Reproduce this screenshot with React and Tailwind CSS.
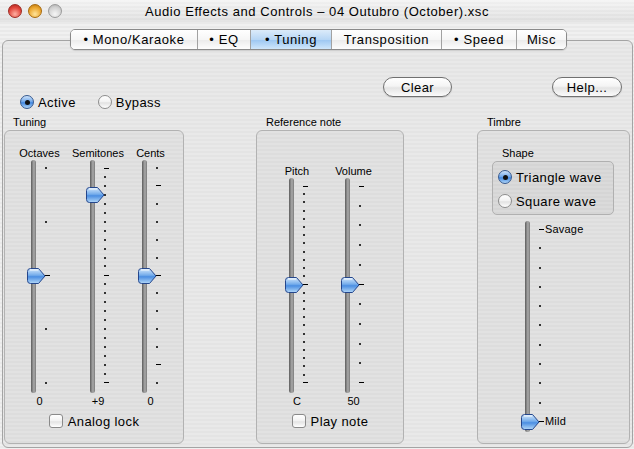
import React from 'react';

const Thumb = ({ top }) => (
  <svg
    width="19"
    height="16"
    viewBox="0 0 19 16"
    className="absolute left-[-4px]"
    style={{ top }}
  >
    <defs>
      <linearGradient id="thumbFill" x1="0" y1="0" x2="0" y2="1">
        <stop offset="0%" stopColor="#d6e9fc" />
        <stop offset="45%" stopColor="#74aceb" />
        <stop offset="55%" stopColor="#4b8ee2" />
        <stop offset="100%" stopColor="#b3d8f8" />
      </linearGradient>
    </defs>
    <path
      d="M3.5 0.5 H11.5 L18 8 L11.5 15.5 H3.5 Q0.5 15.5 0.5 12.5 V3.5 Q0.5 0.5 3.5 0.5 Z"
      fill="url(#thumbFill)"
      stroke="#24468c"
      strokeWidth="1"
    />
    <path d="M3 2 H11" stroke="#ffffff" strokeOpacity="0.7" strokeWidth="1.2" />
  </svg>
);

// vertical aqua slider: track, thumb and tick column
const Slider = ({ hClass, ticks, majors, frac, labels = {} }) => {
  const h = parseInt(hClass.match(/\d+/)[0], 10);
  const center = 8 + frac * (h - 18);
  return (
    <div className={`flex ${hClass}`}>
      <div className="relative h-full w-[5px] rounded-full bg-[linear-gradient(to_right,#5c5c5c,#999999_45%,#a9a9a9_60%,#7a7a7a)]">
        <Thumb top={center - 8} />
      </div>
      <div className="ml-[9px] flex flex-col justify-between pt-[7px] pb-[9px]">
        {Array.from({ length: ticks }).map((_, i) => (
          <div key={i} className="flex h-[2px] items-center">
            <div
              className={
                majors.includes(i)
                  ? 'h-[1px] w-[5px] bg-black'
                  : 'h-[2px] w-[2px] bg-[#333333]'
              }
            />
            {labels[i] && (
              <span className="ml-[1px] whitespace-nowrap text-[11px] leading-none tracking-[0.2px] text-black">
                {labels[i]}
              </span>
            )}
          </div>
        ))}
      </div>
    </div>
  );
};

const Radio = ({ on }) =>
  on ? (
    <div className="flex h-[14px] w-[14px] items-center justify-center rounded-full border border-[#36598f] bg-[linear-gradient(to_bottom,#cfe4fb,#6aa3e8_50%,#3f86e0_56%,#b0d6f8)]">
      <div className="h-[5px] w-[5px] rounded-full bg-[#111111]" />
    </div>
  ) : (
    <div className="h-[14px] w-[14px] rounded-full border border-[#8d8d8d] bg-[linear-gradient(to_bottom,#ffffff,#f2f2f2_50%,#e2e2e2_56%,#ffffff)]" />
  );

const Checkbox = () => (
  <div className="h-[14px] w-[14px] rounded-[3px] border border-[#8a8a8a] bg-[linear-gradient(to_bottom,#ffffff,#f2f2f2_50%,#e3e3e3_56%,#ffffff)]" />
);

const SliderColumn = ({ label, value, widthClass, children }) => (
  <div className={`flex flex-col items-center ${widthClass}`}>
    <span className="text-[11px] leading-[13px]">{label}</span>
    <div className="pl-[2px]">{children}</div>
    <span className="mt-[2px] text-[11px] leading-[13px]">{value}</span>
  </div>
);

const tabs = [
  { label: '• Mono/Karaoke', w: 'w-[126px]' },
  { label: '• EQ', w: 'w-[53px]' },
  { label: '• Tuning', w: 'w-[81px]', active: true },
  { label: 'Transposition', w: 'w-[110px]' },
  { label: '• Speed', w: 'w-[75px]' },
  { label: 'Misc', w: 'w-[50px]' },
];

export default function App() {
  return (
    <div className="h-[449px] w-[634px] overflow-hidden bg-[image:repeating-linear-gradient(to_bottom,#f0f0f0_0px,#f0f0f0_2px,#e9e9e9_2px,#e9e9e9_4px)] font-['Liberation_Sans',Arial,sans-serif] text-black">
      {/* Title bar */}
      <div className="grid h-[22px] grid-cols-[70px_1fr_70px] items-center bg-[linear-gradient(to_bottom,rgba(255,255,255,0.35),rgba(0,0,0,0.05))]">
        <div className="flex gap-[6px] pl-[8px]">
          <div className="h-[14px] w-[14px] rounded-full border border-[#9e2a22] bg-[radial-gradient(circle_at_50%_75%,#ffb0a2,#e0443a_60%,#a8231b)]" />
          <div className="h-[14px] w-[14px] rounded-full border border-[#a86a0c] bg-[radial-gradient(circle_at_50%_75%,#ffe49a,#eaa52c_60%,#b3700c)]" />
          <div className="h-[14px] w-[14px] rounded-full border border-[#9a9a9a] bg-[radial-gradient(circle_at_50%_75%,#f6f6f6,#d2d2d2_60%,#a9a9a9)]" />
        </div>
        <div className="text-center text-[13px] leading-none tracking-[0.55px] whitespace-nowrap">
          Audio Effects and Controls – 04 Outubro (October).xsc
        </div>
        <div />
      </div>

      {/* Tabs */}
      <div className="relative z-10 flex justify-center pt-[7px] pl-[3px]">
        <div className="flex h-[21px] overflow-hidden rounded-[5px] border border-[#8a8a8a] shadow-[0_1px_1px_rgba(0,0,0,0.12)]">
          {tabs.map((t, i) => (
            <div
              key={t.label}
              className={`flex items-center justify-center text-[13px] leading-none tracking-[0.6px] ${t.w} ${
                i > 0 ? 'border-l border-[#a2a2a2]' : ''
              } ${
                t.active
                  ? 'bg-[linear-gradient(to_bottom,#dcebfa,#b7d6f5_50%,#9fc8f2_55%,#cfe6fb)]'
                  : 'bg-[linear-gradient(to_bottom,#ffffff,#f6f6f6_50%,#ececec_55%,#fdfdfd)]'
              }`}
            >
              {t.label}
            </div>
          ))}
        </div>
      </div>

      {/* Tab pane */}
      <div className="-mt-[10px] ml-[2px] h-[408px] w-[631px] rounded-[6px] border border-[#a4a4a4] bg-[image:repeating-linear-gradient(to_bottom,#e9e9e9_0px,#e9e9e9_2px,#e4e4e4_2px,#e4e4e4_4px)]">
        {/* Top row */}
        <div className="flex h-[75px] items-start">
          <div className="mt-[54px] ml-[17px] flex items-center gap-[22px] text-[13px] leading-none tracking-[0.4px]">
            <div className="flex items-center gap-[4px]">
              <Radio on />
              <span>Active</span>
            </div>
            <div className="flex items-center gap-[4px]">
              <Radio />
              <span>Bypass</span>
            </div>
          </div>
          <button className="mt-[36px] ml-auto flex h-[20px] w-[69px] items-center justify-center rounded-full border border-[#707070] bg-[linear-gradient(to_bottom,#ffffff,#f4f4f4_45%,#e4e4e4_55%,#fbfbfb)] text-[13px] leading-none tracking-[0.4px] shadow-[0_1px_1px_rgba(0,0,0,0.15)]">
            Clear
          </button>
          <button className="mt-[36px] mr-[10px] ml-[100px] flex h-[20px] w-[70px] items-center justify-center rounded-full border border-[#707070] bg-[linear-gradient(to_bottom,#ffffff,#f4f4f4_45%,#e4e4e4_55%,#fbfbfb)] text-[13px] leading-none tracking-[0.4px] shadow-[0_1px_1px_rgba(0,0,0,0.15)]">
            Help...
          </button>
        </div>

        {/* Groups */}
        <div className="flex pl-[1px]">
          {/* Tuning */}
          <div className="w-[180px]">
            <div className="mb-[1px] pl-[9px] text-[11px] leading-[13px]">Tuning</div>
            <div className="flex h-[314px] flex-col rounded-[6px] border border-[#b2b2b2] bg-[image:repeating-linear-gradient(to_bottom,#e2e2e2_0px,#e2e2e2_2px,#dddddd_2px,#dddddd_4px)] pt-[16px]">
              <div className="flex pl-[8px]">
                <SliderColumn label="Octaves" value="0" widthClass="w-[53px]">
                  <Slider hClass="h-[233px]" ticks={5} majors={[2]} frac={0.5} />
                </SliderColumn>
                <SliderColumn label="Semitones" value="+9" widthClass="w-[64px]">
                  <Slider hClass="h-[233px]" ticks={25} majors={[0, 12, 24]} frac={0.125} />
                </SliderColumn>
                <SliderColumn label="Cents" value="0" widthClass="w-[41px]">
                  <Slider hClass="h-[233px]" ticks={13} majors={[1, 6, 11]} frac={0.5} />
                </SliderColumn>
              </div>
              <div className="mt-[6px] flex items-center justify-center gap-[5px] text-[13px] leading-none tracking-[0.4px]">
                <Checkbox />
                <span>Analog lock</span>
              </div>
            </div>
          </div>

          {/* Reference note */}
          <div className="ml-[72px] w-[148px]">
            <div className="mb-[1px] pl-[10px] text-[11px] leading-[13px]">Reference note</div>
            <div className="flex h-[314px] flex-col rounded-[6px] border border-[#b2b2b2] bg-[image:repeating-linear-gradient(to_bottom,#e2e2e2_0px,#e2e2e2_2px,#dddddd_2px,#dddddd_4px)] pt-[34px]">
              <div className="flex pl-[15px]">
                <SliderColumn label="Pitch" value="C" widthClass="w-[50px]">
                  <Slider hClass="h-[215px]" ticks={25} majors={[0, 12, 24]} frac={0.5} />
                </SliderColumn>
                <SliderColumn label="Volume" value="50" widthClass="w-[63px]">
                  <Slider hClass="h-[215px]" ticks={11} majors={[0, 5, 10]} frac={0.5} />
                </SliderColumn>
              </div>
              <div className="mt-[6px] flex items-center justify-center gap-[5px] text-[13px] leading-none tracking-[0.4px]">
                <Checkbox />
                <span>Play note</span>
              </div>
            </div>
          </div>

          {/* Timbre */}
          <div className="ml-[73px] w-[153px]">
            <div className="mb-[1px] pl-[10px] text-[11px] leading-[13px]">Timbre</div>
            <div className="flex h-[314px] flex-col rounded-[6px] border border-[#b2b2b2] bg-[image:repeating-linear-gradient(to_bottom,#e2e2e2_0px,#e2e2e2_2px,#dddddd_2px,#dddddd_4px)] pt-[16px] pl-[14px]">
              <div className="pl-[10px] text-[11px] leading-[13px]">Shape</div>
              <div className="mt-[1px] flex h-[54px] w-[122px] flex-col gap-[10px] rounded-[5px] border border-[#b0b0b0] bg-[image:repeating-linear-gradient(to_bottom,#dadada_0px,#dadada_2px,#d5d5d5_2px,#d5d5d5_4px)] pt-[8px] pl-[5px] text-[13px] leading-none tracking-[0.4px]">
                <div className="flex h-[14px] items-center gap-[4px]">
                  <Radio on />
                  <span>Triangle wave</span>
                </div>
                <div className="flex h-[14px] items-center gap-[4px]">
                  <Radio />
                  <span>Square wave</span>
                </div>
              </div>
              <div className="mt-[6px] ml-[33px]">
                <Slider
                  hClass="h-[211px]"
                  ticks={11}
                  majors={[0, 10]}
                  frac={1}
                  labels={{ 0: 'Savage', 10: 'Mild' }}
                />
              </div>
            </div>
          </div>
        </div>
      </div>
    </div>
  );
}
